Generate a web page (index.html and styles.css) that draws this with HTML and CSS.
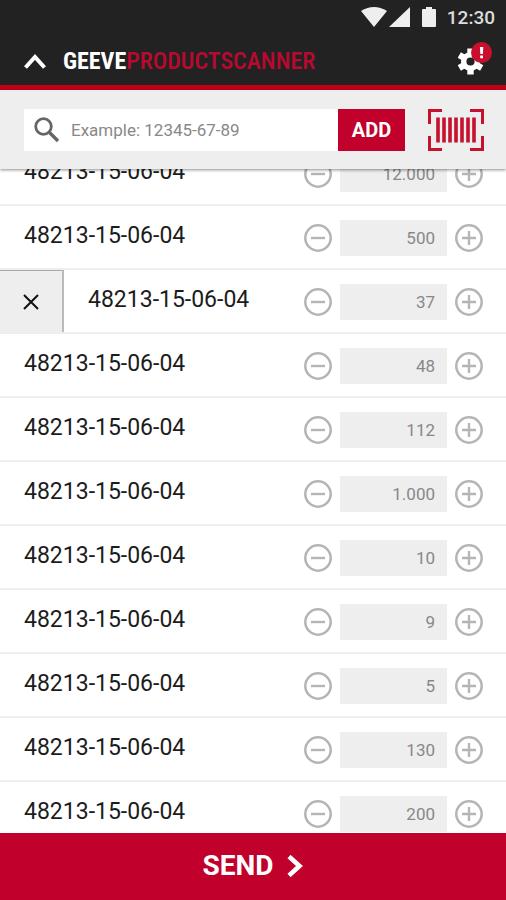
FILE: index.html
```html
<!DOCTYPE html>
<html lang="en">
<head>
<meta charset="utf-8">
<meta name="viewport" content="width=device-width, initial-scale=1">
<title>Geeve Productscanner</title>
<link rel="stylesheet" href="styles.css">
</head>
<body>
<svg class="sprite" aria-hidden="true">
  <symbol id="minus" viewBox="0 0 28 28"><circle cx="14" cy="14" r="12.700" fill="none" stroke="currentColor" stroke-width="2.500"/><path d="M7 14h14" stroke="currentColor" stroke-width="2.400"/></symbol>
  <symbol id="plus" viewBox="0 0 28 28"><circle cx="14" cy="14" r="12.700" fill="none" stroke="currentColor" stroke-width="2.500"/><path d="M7 14h14M14 7v14" stroke="currentColor" stroke-width="2.400"/></symbol>
</svg>
<div class="app">
  <header class="header">
    <div class="status">
      <svg width="26" height="20" viewBox="0 0 26 20"><path d="M0 4Q13-4 26 4L13 20z" fill="#eee"/></svg>
      <svg class="signal" width="21" height="20" viewBox="0 0 21 20"><path d="M21 0v20H0z" fill="#eee"/></svg>
      <svg class="battery" width="14" height="20" viewBox="0 0 14 20"><path d="M4 0h6v2h3q1 0 1 1v16q0 1-1 1H1q-1 0-1-1V3q0-1 1-1h3z" fill="#eee"/></svg>
      <span class="clock">12:30</span>
    </div>
    <div class="titlebar">
      <button class="icon-button" aria-label="Collapse"><svg width="22" height="16" viewBox="0 0 22 16"><path d="M1.500 14.500 11 4l9.500 10.500" fill="none" stroke="#fff" stroke-width="4"/></svg></button>
      <h1 class="title">GEEVE<span class="title-accent">PRODUCTSCANNER</span></h1>
      <button class="icon-button settings" aria-label="Settings, 1 alert">
        <svg width="34" height="34" viewBox="0 0 34 34">
          <g stroke="#fff" fill="none">
            <circle cx="12.500" cy="19.500" r="6.800" stroke-width="5.400"/>
            <path d="M12.500 6.500v5M12.500 27.500v5M1.300 13l4.300 2.500M19.400 23.500l4.300 2.500M1.300 26l4.300-2.500M19.400 15.500l4.300-2.500" stroke-width="6.400"/>
          </g>
          <circle cx="23.500" cy="10.500" r="10.500" fill="#c8102e"/>
          <path d="M21.900 5h3.400l-.4 7h-2.600zM22.200 13.500h2.800v2.800h-2.800z" fill="#fff"/>
        </svg>
      </button>
    </div>
  </header>
  <form class="search">
    <label class="search-box">
      <svg width="26" height="26" viewBox="0 0 26 26"><circle cx="9.500" cy="9.500" r="7.800" fill="none" stroke="#666" stroke-width="2.800"/><path d="M15 15l9 9" stroke="#666" stroke-width="3.400"/></svg>
      <input class="search-input" type="text" placeholder="Example: 12345-67-89" aria-label="Product number">
    </label>
    <button class="add" type="button">ADD</button>
    <button class="icon-button scan" type="button" aria-label="Scan barcode">
      <svg width="56" height="42" viewBox="0 0 56 42"><path d="M14 1.500H1.500V15M42 1.500h12.500V15M14 40.500H1.500V27M42 40.500h12.500V27" fill="none" stroke="#c4122f" stroke-width="3"/><path d="M10 8.500v25M16 8.500v25M22 8.500v25M28 8.500v25M34 8.500v25M40 8.500v25M46 8.500v25" stroke="#c4122f" stroke-width="3.600"/></svg>
    </button>
  </form>
  <main class="viewport">
    <ul class="list">
      <li class="row"><span class="code">48213-15-06-04</span><button class="step" aria-label="Less"><svg><use href="#minus"/></svg></button><input class="amount" value="12.000" aria-label="Amount"><button class="step" aria-label="More"><svg><use href="#plus"/></svg></button></li>
      <li class="row"><span class="code">48213-15-06-04</span><button class="step" aria-label="Less"><svg><use href="#minus"/></svg></button><input class="amount" value="500" aria-label="Amount"><button class="step" aria-label="More"><svg><use href="#plus"/></svg></button></li>
      <li class="row"><button class="delete" aria-label="Delete"><svg width="16" height="16" viewBox="0 0 16 16"><path d="M1 1l14 14M15 1 1 15" stroke="#111" stroke-width="2"/></svg></button><span class="code">48213-15-06-04</span><button class="step" aria-label="Less"><svg><use href="#minus"/></svg></button><input class="amount" value="37" aria-label="Amount"><button class="step" aria-label="More"><svg><use href="#plus"/></svg></button></li>
      <li class="row"><span class="code">48213-15-06-04</span><button class="step" aria-label="Less"><svg><use href="#minus"/></svg></button><input class="amount" value="48" aria-label="Amount"><button class="step" aria-label="More"><svg><use href="#plus"/></svg></button></li>
      <li class="row"><span class="code">48213-15-06-04</span><button class="step" aria-label="Less"><svg><use href="#minus"/></svg></button><input class="amount" value="112" aria-label="Amount"><button class="step" aria-label="More"><svg><use href="#plus"/></svg></button></li>
      <li class="row"><span class="code">48213-15-06-04</span><button class="step" aria-label="Less"><svg><use href="#minus"/></svg></button><input class="amount" value="1.000" aria-label="Amount"><button class="step" aria-label="More"><svg><use href="#plus"/></svg></button></li>
      <li class="row"><span class="code">48213-15-06-04</span><button class="step" aria-label="Less"><svg><use href="#minus"/></svg></button><input class="amount" value="10" aria-label="Amount"><button class="step" aria-label="More"><svg><use href="#plus"/></svg></button></li>
      <li class="row"><span class="code">48213-15-06-04</span><button class="step" aria-label="Less"><svg><use href="#minus"/></svg></button><input class="amount" value="9" aria-label="Amount"><button class="step" aria-label="More"><svg><use href="#plus"/></svg></button></li>
      <li class="row"><span class="code">48213-15-06-04</span><button class="step" aria-label="Less"><svg><use href="#minus"/></svg></button><input class="amount" value="5" aria-label="Amount"><button class="step" aria-label="More"><svg><use href="#plus"/></svg></button></li>
      <li class="row"><span class="code">48213-15-06-04</span><button class="step" aria-label="Less"><svg><use href="#minus"/></svg></button><input class="amount" value="130" aria-label="Amount"><button class="step" aria-label="More"><svg><use href="#plus"/></svg></button></li>
      <li class="row"><span class="code">48213-15-06-04</span><button class="step" aria-label="Less"><svg><use href="#minus"/></svg></button><input class="amount" value="200" aria-label="Amount"><button class="step" aria-label="More"><svg><use href="#plus"/></svg></button></li>
    </ul>
  </main>
  <button class="send">SEND <svg width="16" height="22" viewBox="0 0 16 22"><path d="M2 1.500l10.500 9.500L2 20.500" fill="none" stroke="#fff" stroke-width="4.600"/></svg></button>
</div>
</body>
</html>
```
FILE: styles.css
```css
* { box-sizing: border-box; }

body {
  margin: 0;
  font-family: Roboto, "Liberation Sans", sans-serif;
  color: #1c1c1c;
  background: #fff;
}

button, input { font: inherit; border: 0; border-radius: 0; padding: 0; margin: 0; outline: 0; }
button { background: none; cursor: pointer; }
svg { display: block; flex: none; }

.sprite { position: absolute; width: 0; height: 0; }

.app { display: flex; flex-direction: column; height: 100vh; }

.header {
  flex: none;
  background: #222;
  border-bottom: 5px solid #c20016;
}

.status {
  display: flex;
  align-items: center;
  justify-content: flex-end;
  height: 34px;
  padding-right: 11px;
}
.signal { margin-left: 2px; }
.battery { margin: 0 11px 0 12px; }
.clock { font-size: 19px; font-weight: 500; color: #ddd; }

.titlebar {
  display: flex;
  align-items: center;
  height: 51px;
  padding: 3px 14px 0 24px;
}
.icon-button { display: flex; flex: none; }
.title {
  flex: 1;
  margin: 0 0 0 17px;
  font-family: "Roboto Condensed", "Liberation Sans Narrow", Roboto, sans-serif;
  font-size: 24px;
  line-height: 28px;
  font-weight: 700;
  color: #fff;
}
.title-accent { font-weight: 500; color: #b80a30; }
.settings { margin-bottom: 4px; }

.search {
  position: relative;
  z-index: 1;
  flex: none;
  display: flex;
  align-items: center;
  height: 79px;
  padding: 0 22px 0 24px;
  background: #eee;
  box-shadow: 0 1px 3px rgba(0, 0, 0, .45);
}
.search-box {
  flex: 1;
  display: flex;
  align-items: center;
  gap: 11px;
  height: 42px;
  padding-left: 10px;
  background: #fff;
}
.search-input { flex: 1; min-width: 0; font-size: 17px; background: none; }
.search-input::placeholder { color: #888; opacity: 1; }
.add {
  width: 67px;
  height: 42px;
  background: #c1002b;
  color: #fff;
  font-size: 20px;
  font-weight: 700;
}
.scan { margin-left: 23px; }

.viewport { flex: 1; min-height: 0; overflow: hidden; }
/* The list starts partly scrolled under the search bar. */
.list { list-style: none; margin: -27px 0 0; padding: 0; }
.row {
  display: flex;
  align-items: center;
  gap: 8px;
  height: 64px;
  padding: 2px 23px 0 0;
  border-bottom: 2px solid #eee;
}
.code {
  flex: 1;
  padding: 0 0 4px 24px;
  font-size: 23px;
  line-height: 28px;
}
.delete {
  display: flex;
  align-items: center;
  justify-content: center;
  align-self: stretch;
  width: 64px;
  margin: -2px -8px 0 0;
  background: #eee;
  border-top: 1px solid #aaa;
  border-right: 2px solid #bbb;
}
.step { color: #b5b5b5; }
.step svg { width: 28px; height: 28px; }
.amount {
  width: 107px;
  height: 36px;
  padding-right: 12px;
  background: #eee;
  color: #888;
  font-size: 17px;
  text-align: right;
}

.send {
  flex: none;
  display: flex;
  align-items: center;
  justify-content: center;
  gap: 14px;
  height: 67px;
  padding-bottom: 2px;
  background: #c1002b;
  color: #fff;
  font-size: 28px;
  font-weight: 700;
}
```
